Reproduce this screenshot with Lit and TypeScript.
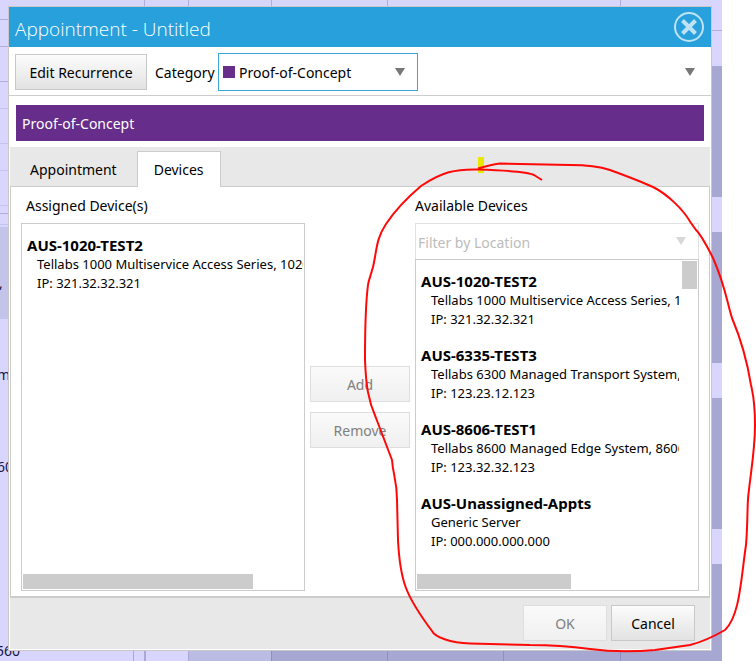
import { LitElement, html, svg, css, nothing } from "lit";
import { customElement, property, state } from "lit/decorators.js";
import { classMap } from "lit/directives/class-map.js";

interface Device {
  name: string;
  model: string;
  ip: string;
}

const ASSIGNED: Device[] = [
  { name: "AUS-1020-TEST2", model: "Tellabs 1000 Multiservice Access Series, 1020", ip: "321.32.32.321" },
];

const AVAILABLE: Device[] = [
  { name: "AUS-1020-TEST2", model: "Tellabs 1000 Multiservice Access Series, 1020", ip: "321.32.32.321" },
  { name: "AUS-6335-TEST3", model: "Tellabs 6300 Managed Transport System, 6335", ip: "123.23.12.123" },
  { name: "AUS-8606-TEST1", model: "Tellabs 8600 Managed Edge System, 8606", ip: "123.32.32.123" },
  { name: "AUS-Unassigned-Appts", model: "Generic Server", ip: "000.000.000.000" },
];

const triangle = html`<svg class="tri" width="10" height="8" viewBox="0 0 10 8" aria-hidden="true">
  <path d="M0 0H10L5 8Z" fill="currentColor" />
</svg>`;

/* Calendar that lies behind the dialog. */
@customElement("calendar-backdrop")
export class CalendarBackdrop extends LitElement {
  static styles = css`
    :host {
      display: block;
      overflow: hidden;
    }
    svg {
      display: block;
      font: 14px "Noto Sans", sans-serif;
    }
  `;

  render() {
    const rule = (y: number, c = "#b0aedc") => svg`<rect x="0" y=${y} width="8" height="1" fill=${c} />`;
    const col = (x: number, c = "#b0aedc") => svg`<rect x=${x} y="0" width="1" height="6" fill=${c} />`;
    const busy = (y: number, h: number) => svg`<rect x="712" y=${y} width="10" height=${h} fill="#a7a8d2" />`;
    return html`<svg width="722" height="661" viewBox="0 0 722 661" aria-hidden="true">
      <rect width="722" height="661" fill="#d8d6ff" />
      ${[19, 46, 81, 213].map((y) => rule(y))} ${[108, 143, 170, 205, 224].map((y) => rule(y, "#c4c2ee"))}
      <rect x="0" y="227" width="8" height="92" fill="#c4c3ea" />
      ${[144, 188, 271, 387, 620].map((x) => col(x))}
      <rect x="712" y="30" width="10" height="1" fill="#b0aedc" />
      ${busy(66, 131)} ${busy(232, 131)} ${busy(398, 131)} ${busy(564, 97)}
      <rect x="189" y="651" width="83" height="10" fill="#babce4" />
      <rect x="272" y="651" width="450" height="10" fill="#a7a8d2" />
      ${[133, 188].map((x) => svg`<rect x=${x} y="651" width="1" height="10" fill="#a9a8d6" />`)}
      <rect x="144" y="651" width="2" height="10" fill="#a9a8d6" />
      ${[271, 387, 503, 620].map((x) => svg`<rect x=${x} y="651" width="1" height="10" fill="#8e8fc0" />`)}
      <g fill="#14143c">
        <text x="-1" y="288">,</text>
        <text x="-3" y="380">m</text>
        <text x="-3" y="472">60</text>
        <text x="-4" y="656">560</text>
      </g>
    </svg>`;
  }
}

/* Bordered list of devices with its own scroll thumbs. */
@customElement("device-list")
export class DeviceList extends LitElement {
  @property({ attribute: false }) devices: Device[] = [];
  @property({ type: Number }) thumb = 80;
  @property({ type: Boolean }) vertical = false;
  @property() label = "";

  static styles = css`
    :host {
      display: flex;
      flex-direction: column;
      min-width: 0;
      padding: 1px;
      border: 1px solid #ccc;
      background: #fff;
      font: 13px/19px "Noto Sans", sans-serif;
      color: #000;
    }
    .view {
      flex: 1;
      display: flex;
      gap: 3px;
      min-height: 0;
    }
    ul {
      flex: 1;
      min-width: 0;
      margin: 0;
      padding: 0;
      list-style: none;
      overflow: hidden;
      white-space: nowrap;
    }
    li {
      padding: 10px 0 6px 4px;
    }
    .name {
      font-size: 15px;
      line-height: 20px;
      font-weight: 700;
    }
    .detail {
      padding-left: 10px;
    }
    .vbar {
      width: 15px;
    }
    .vthumb {
      height: 28px;
      background: #ccc;
    }
    .hthumb {
      height: 15px;
      background: #ccc;
    }
  `;

  render() {
    return html`<div class="view">
        <ul aria-label=${this.label}>
          ${this.devices.map(
            (d) => html`<li>
              <div class="name">${d.name}</div>
              <div class="detail">${d.model}</div>
              <div class="detail">IP: ${d.ip}</div>
            </li>`
          )}
        </ul>
        ${this.vertical ? html`<div class="vbar"><div class="vthumb"></div></div>` : nothing}
      </div>
      <div class="hthumb" style="width:${this.thumb}%"></div>`;
  }
}

@customElement("app-root")
export class AppRoot extends LitElement {
  @state() private tab = "Devices";

  static styles = css`
    :host {
      display: flex;
      flex-direction: column;
      position: relative;
      box-sizing: border-box;
      min-height: 100vh;
      padding: 6px 44px 10px 8px;
      overflow: hidden;
      background: #fff;
      font: 14px/20px "Noto Sans", sans-serif;
      color: #000;
    }
    *,
    device-list {
      box-sizing: border-box;
    }
    button,
    select {
      font: inherit;
      color: inherit;
      margin: 0;
    }
    .backdrop {
      position: absolute;
      top: 0;
      left: 0;
    }
    .ink {
      position: absolute;
      top: 0;
      left: 0;
      pointer-events: none;
    }
    .dialog {
      position: relative;
      flex: 1;
      display: flex;
      flex-direction: column;
      padding-bottom: 1px;
      border: 1px solid #c8c8c8;
      background: #fff;
    }
    .title {
      display: flex;
      align-items: center;
      justify-content: space-between;
      height: 40px;
      padding: 0 6px;
      background: #27a0dc;
      color: #fff;
    }
    .title h1 {
      margin: 0;
      padding-top: 4px;
      font: 300 19px/28px "Open Sans", sans-serif;
    }
    .close {
      display: flex;
      padding: 0;
      border: 0;
      background: none;
    }
    .toolbar {
      display: flex;
      align-items: center;
      padding: 6px 6px 4px;
      border-bottom: 1px solid #ccc;
    }
    .btn {
      height: 36px;
      padding: 2px 0 0;
      border: 1px solid #c8c8c8;
      background: linear-gradient(#fcfcfc, #e2e2e2);
    }
    .btn:disabled {
      color: #808080;
      border-color: #dedede;
      background: linear-gradient(#fafafa, #f0f0f0);
    }
    .recur {
      width: 132px;
    }
    .toolbar label {
      width: 63px;
      margin-left: 8px;
      padding-top: 2px;
    }
    .combo {
      display: grid;
      grid-template-columns: 18px 1fr 23px;
      align-items: center;
    }
    .combo > * {
      grid-row: 1;
    }
    .combo select {
      grid-column: 1 / -1;
      width: 100%;
      height: 38px;
      appearance: none;
      border: 1px solid #3fa6d8;
      border-radius: 0;
      background: #fff;
      padding: 2px 24px 0 20px;
      outline: none;
    }
    .combo .tri {
      grid-column: 3;
      pointer-events: none;
      color: #777;
    }
    .category {
      width: 200px;
    }
    .swatch {
      grid-column: 1;
      width: 12px;
      height: 12px;
      margin-left: 5px;
      background: #662d8b;
    }
    .more {
      display: flex;
      margin-left: auto;
      padding: 0 10px;
      border: 0;
      background: none;
      color: #777;
    }
    .band {
      height: 36px;
      margin: 9px 7px 6px;
      padding: 0 6px;
      background: #662d8b;
      color: #fff;
      line-height: 37px;
    }
    .tabs {
      display: flex;
      align-items: flex-end;
      height: 39px;
      margin: 0 1px;
      background: #e8e8e8;
    }
    .tab {
      height: 36px;
      margin-bottom: -1px;
      padding: 2px 20px 0;
      border: 0;
      background: none;
    }
    .tab.on {
      position: relative;
      padding: 0 16px;
      border: 1px solid #ccc;
      border-bottom: 0;
      background: #fff;
    }
    .pane {
      flex: 1;
      display: grid;
      grid-template-columns: minmax(0, 1fr) 100px minmax(0, 1fr);
      grid-template-rows: 36px minmax(0, 1fr);
      column-gap: 5px;
      margin: 0 1px;
      padding: 0 10px 5px;
      border: 1px solid #ccc;
      border-bottom-width: 2px;
    }
    .pane h2 {
      margin: 0;
      font: inherit;
      line-height: 37px;
    }
    .pane .assigned {
      padding-left: 5px;
    }
    .pane .available {
      grid-column: 3;
    }
    .move {
      display: flex;
      flex-direction: column;
      justify-content: center;
      gap: 10px;
    }
    .stack {
      display: flex;
      flex-direction: column;
    }
    .stack device-list {
      flex: 1;
    }
    .filter select {
      height: 36px;
      padding-left: 2px;
      border-color: #e2e2e2;
      border-bottom: 0;
      color: #bcbcbc;
      opacity: 1;
    }
    .filter .tri {
      color: #d8d8d8;
    }
    .footer {
      display: flex;
      justify-content: flex-end;
      gap: 4px;
      margin: 0 1px;
      padding: 7px 15px 8px;
      background: #e8e8e8;
    }
    .footer .btn {
      width: 84px;
    }
  `;

  render() {
    return html`
      <calendar-backdrop class="backdrop"></calendar-backdrop>
      <section class="dialog" role="dialog" aria-labelledby="title">
        <header class="title">
          <h1 id="title">Appointment - Untitled</h1>
          <button class="close" aria-label="Close">
            <svg width="32" height="32" viewBox="0 0 32 32" fill="none" stroke="#bfe2f5">
              <circle cx="16" cy="16" r="14" stroke-width="2" />
              <path d="M9.500 9.500L22.500 22.500M22.500 9.500L9.500 22.500" stroke-width="4" />
            </svg>
          </button>
        </header>
        <div class="toolbar">
          <button class="btn recur">Edit Recurrence</button>
          <label for="category">Category</label>
          <div class="combo category">
            <select id="category">
              <option>Proof-of-Concept</option>
            </select>
            <span class="swatch"></span>
            ${triangle}
          </div>
          <button class="more" aria-label="More options">${triangle}</button>
        </div>
        <div class="band">Proof-of-Concept</div>
        <nav class="tabs" role="tablist">
          ${["Appointment", "Devices"].map(
            (t) => html`<button
              class=${classMap({ tab: true, on: t === this.tab })}
              role="tab"
              aria-selected=${t === this.tab}
              @click=${() => (this.tab = t)}
            >${t}</button>`
          )}
        </nav>
        <div class="pane">
          <h2 class="assigned">Assigned Device(s)</h2>
          <h2 class="available">Available Devices</h2>
          <device-list label="Assigned devices" .devices=${ASSIGNED} .thumb=${82}></device-list>
          <div class="move">
            <button class="btn" disabled>Add</button>
            <button class="btn" disabled>Remove</button>
          </div>
          <div class="stack">
            <div class="combo filter">
              <select aria-label="Filter by Location" disabled>
                <option>Filter by Location</option>
              </select>
              ${triangle}
            </div>
            <device-list label="Available devices" .devices=${AVAILABLE} .thumb=${55} vertical></device-list>
          </div>
        </div>
        <footer class="footer">
          <button class="btn" disabled>OK</button>
          <button class="btn">Cancel</button>
        </footer>
      </section>
      <svg class="ink" width="756" height="661" viewBox="0 0 756 661" aria-hidden="true">
        <rect x="478" y="157" width="6" height="16" fill="#e8e800" />
        <path
          fill="none"
          stroke="#ff0808"
          stroke-width="2"
          stroke-linejoin="round"
          d="M542 180L534 175Q526 171 478 169.500C455 169 442 172 421 186C408 197 394 212 386 224
            C378 236 377 245 375 257C373 272 369 277 368 285C366 300 365 325 365 360C366 385 368 400 376 418
            L392 460C393 475 397 480 397 500L398 540C400 580 405 595 432 631C435 637 450 643 470 643.500
            L530 645Q560 645 590 649Q620 653 655 650L690 645Q706 641 725 630C740 616 741 578 746 545
            C748 520 747 505 748.500 494C751 470 755 450 755 425C755 400 753 395 751 385C747 360 740 337 732 318
            C727 302 725 285 713 258C706 244 700 234 696 230L691 223
            C683 209 667 194 653 187Q640 181 610 170Q595 165 570 165L500 163.500Q494 164 478 168.500"
        />
      </svg>
    `;
  }
}
